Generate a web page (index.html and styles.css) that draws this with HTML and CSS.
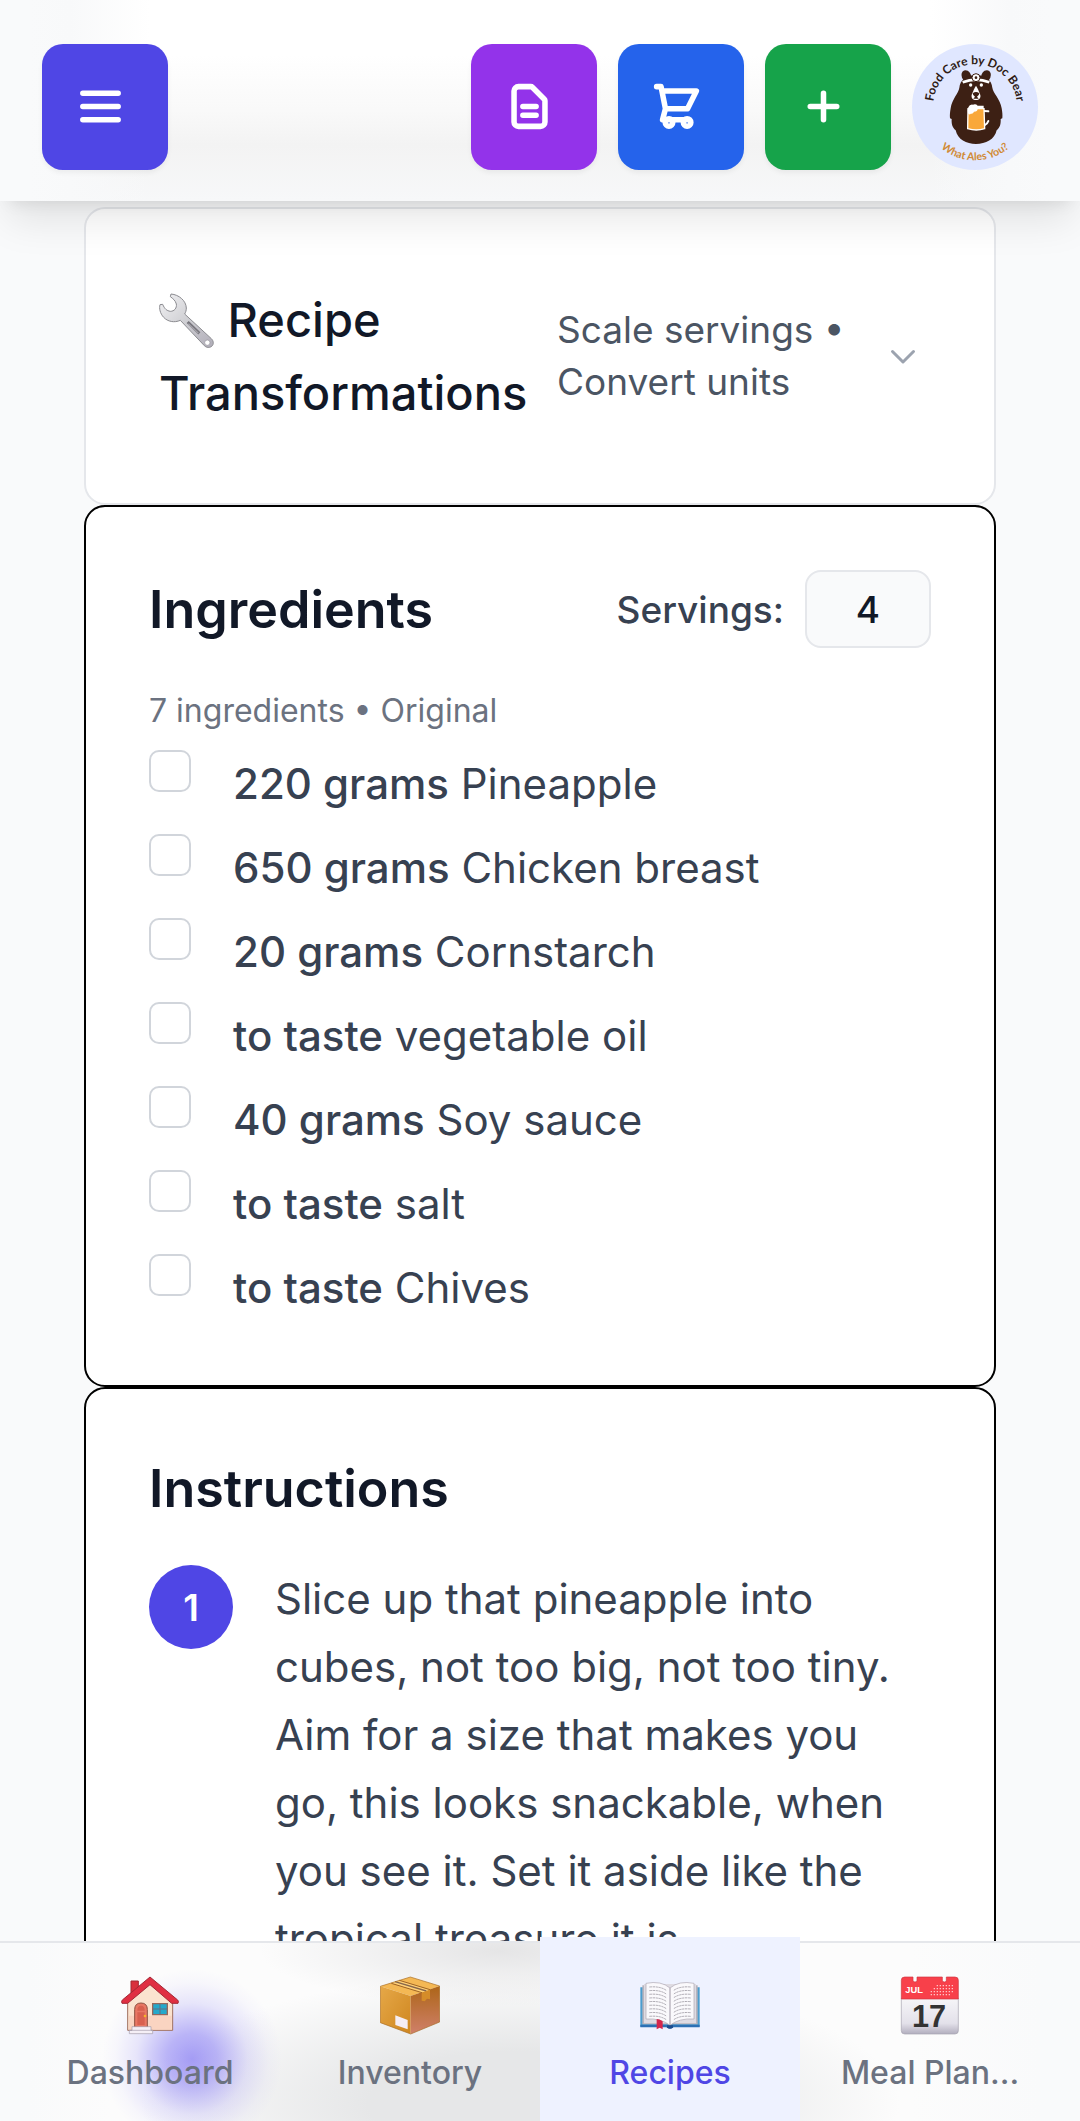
FILE: index.html
```html
<!DOCTYPE html>
<html lang="en">
<head>
<meta charset="utf-8">
<meta name="viewport" content="width=device-width, initial-scale=1">
<title>Recipe</title>
<link rel="stylesheet" href="styles.css">
</head>
<body>
<header class="topbar">
  <button class="action action-menu" type="button" aria-label="Menu">
    <svg class="action-icon" viewBox="0 0 24 24"><path d="M4 6h16M4 12h16M4 18h16"/></svg>
  </button>
  <div class="topbar-actions">
    <button class="action action-notes" type="button" aria-label="Notes">
      <svg class="action-icon" viewBox="0 0 24 24"><path d="M9 12h6m-6 4h6m2 5H7a2 2 0 01-2-2V5a2 2 0 012-2h5.586a1 1 0 01.707.293l5.414 5.414a1 1 0 01.293.707V19a2 2 0 01-2 2z"/></svg>
    </button>
    <button class="action action-cart" type="button" aria-label="Shopping list">
      <svg class="action-icon" viewBox="0 0 24 24"><path d="M3 3h2l.4 2M7 13h10l4-8H5.4M7 13L5.4 5M7 13l-1.300 5h11.300"/><circle cx="8.600" cy="19.200" r="1.700"/><circle cx="16.800" cy="19.200" r="1.700"/></svg>
    </button>
    <button class="action action-add" type="button" aria-label="Add recipe">
      <svg class="action-icon" viewBox="0 0 24 24"><path d="M12 6v12M6 12h12"/></svg>
    </button>
    <a class="avatar" href="#" aria-label="Profile">
      <svg class="avatar-logo" viewBox="36 42 378 378">
        <defs>
          <path id="arc-top" d="M101 251a126 126 0 1 1 248 0"/>
          <path id="arc-bottom" d="M65 231a160 160 0 0 0 320 0"/>
        </defs>
        <text class="logo-name"><textPath href="#arc-top" startOffset="50%">Food Care by Doc Bear</textPath></text>
        <text class="logo-tag"><textPath href="#arc-bottom" startOffset="50%">What Ales You?</textPath></text>
        <g fill="#3d2014">
          <ellipse cx="199" cy="138" rx="14" ry="18" transform="rotate(-22 199 138)"/>
          <ellipse cx="258" cy="138" rx="14" ry="18" transform="rotate(22 258 138)"/>
          <path d="M228 135c-30 0-48 16-50 38-2 16-22 34-26 62-2 12-3 20-2 30l5 2c-1 14 2 26 12 34 6 28 32 41 61 41s56-13 62-41c10-8 13-20 12-34l5-2c1-10 0-18-2-30-4-28-26-46-28-62-2-22-19-38-49-38z"/>
        </g>
        <path d="M188 157q40-16 80 0" fill="none" stroke="#fff" stroke-width="8"/>
        <circle cx="228" cy="143" r="12" fill="#fff" stroke="#3d2014" stroke-width="3"/>
        <circle cx="228" cy="143" r="4" fill="#3d2014"/>
        <circle cx="212" cy="165" r="5" fill="#fff"/><circle cx="244" cy="165" r="5" fill="#fff"/>
        <path d="M228 167c-5 8-9 17-13 28-2 9 4 15 13 15s15-6 13-15c-4-11-8-20-13-28z" fill="#fff"/>
        <path d="M218 190q10-8 20 0-1 8-7 10l5 6h-16l5-6q-6-2-7-10z" fill="#3d2014"/>
        <path d="M251 243l14 1M253 286q10-5 12-13" fill="none" stroke="#fff" stroke-width="6" stroke-linecap="round"/>
        <path d="M204 236h48l2 60q-25 8-51 0z" fill="#f9a83a" stroke="#fff" stroke-width="4"/>
        <path d="M204 250q-2-12 1-18 4-10 14-8 8-4 14 3h18v9h-18q0 9-11 9-3 8-10 6-3 5-8-1z" fill="#fff"/>
      </svg>
    </a>
  </div>
</header>

<main class="content">
  <section class="card card-soft">
    <button class="transform-toggle" type="button" aria-expanded="false">
      <span class="transform-title"><svg class="wrench" viewBox="30 36 168 168" aria-hidden="true">
        <defs><linearGradient id="steel" x1="0" y1="0" x2="1" y2="1"><stop offset="0" stop-color="#f2f2f4"/><stop offset=".5" stop-color="#cfcfd3"/><stop offset="1" stop-color="#b0adb8"/></linearGradient></defs>
        <path d="M66 39c24 2 45 20 46 42 0 7-2 13-5 18l80 74c8 8 7 17 2 22-6 6-16 6-23-1l-72-76c-18 8-38 4-50-9-11-12-14-27-11-38l8-1c6 14 12 19 23 21 12 0 20-10 18-22-3-11-10-16-18-22z" fill="url(#steel)" stroke="#8b8b90" stroke-width="3"/>
        <path d="M116 123l35 34" stroke="#77757c" stroke-width="9"/>
        <path d="M118 128l30 29" stroke="#a5a3aa" stroke-width="4"/>
        <circle cx="175" cy="185" r="8" fill="#fff" stroke="#96939c" stroke-width="2"/>
      </svg> Recipe Transformations</span>
      <span class="transform-hint">Scale servings • Convert units</span>
      <svg class="chevron" viewBox="0 0 24 24" aria-hidden="true"><path d="M19 9l-7 7-7-7"/></svg>
    </button>
  </section>

  <section class="card card-padded">
    <div class="card-head">
      <h2 class="card-title">Ingredients</h2>
      <div class="servings">
        <label class="servings-label" for="servings">Servings:</label>
        <input class="servings-input" id="servings" type="text" inputmode="numeric" value="4">
      </div>
    </div>
    <p class="summary">7 ingredients • Original</p>
    <ul class="ingredients">
      <li><label class="ingredient"><input class="tick" type="checkbox"><span><strong class="amount">220 grams</strong> Pineapple</span></label></li>
      <li><label class="ingredient"><input class="tick" type="checkbox"><span><strong class="amount">650 grams</strong> Chicken breast</span></label></li>
      <li><label class="ingredient"><input class="tick" type="checkbox"><span><strong class="amount">20 grams</strong> Cornstarch</span></label></li>
      <li><label class="ingredient"><input class="tick" type="checkbox"><span><strong class="amount">to taste</strong> vegetable oil</span></label></li>
      <li><label class="ingredient"><input class="tick" type="checkbox"><span><strong class="amount">40 grams</strong> Soy sauce</span></label></li>
      <li><label class="ingredient"><input class="tick" type="checkbox"><span><strong class="amount">to taste</strong> salt</span></label></li>
      <li><label class="ingredient"><input class="tick" type="checkbox"><span><strong class="amount">to taste</strong> Chives</span></label></li>
    </ul>
  </section>

  <section class="card card-padded">
    <h2 class="card-title">Instructions</h2>
    <ol class="steps">
      <li class="step">
        <span class="step-number">1</span>
        <p class="step-text">Slice up that pineapple into cubes, not too big, not too tiny. Aim for a size that makes you go, this looks snackable, when you see it. Set it aside like the tropical treasure it is.</p>
      </li>
    </ol>
  </section>
</main>

<nav class="tabs" aria-label="Main">
  <a class="tab" href="#">
    <svg class="tab-icon" viewBox="63 48 180 180" aria-hidden="true">
      <path d="M96 66h22v40H96z" fill="#d9303c" stroke="#a32832" stroke-width="3"/>
      <path d="M86 120l66-60 69 60v94H86z" fill="#fbe3cf" stroke="#a0705f" stroke-width="3"/>
      <path d="M90 170h128v42H90z" fill="#fac9b8" opacity=".6"/>
      <path d="M153 54l83 69q4 4 1 10h-19l-65-56-67 56H69q-3-6 1-10z" fill="#e02f42" stroke="#a32836" stroke-width="3" stroke-linejoin="round"/>
      <path d="M107 206v-54q0-20 19-20t19 20v54z" fill="#e87764" stroke="#8f5141" stroke-width="3"/>
      <path d="M115 160h22v38h-22zM115 155q0-15 11-15t11 15z" fill="#d8604f"/>
      <circle cx="138" cy="171" r="4" fill="#f7b528"/>
      <path d="M161 134h44v33h-44z" fill="#23a9cc" stroke="#95685d" stroke-width="4"/>
      <path d="M183 134v33M161 150h44" stroke="#666f80" stroke-width="3"/>
      <path d="M99 203h57v11h5v10H91v-10h8zM91 214h70" fill="#f5eff6" stroke="#a29aa9" stroke-width="2"/>
    </svg>
    <span class="tab-label">Dashboard</span>
  </a>
  <a class="tab" href="#">
    <svg class="tab-icon" viewBox="0 0 180 180" aria-hidden="true">
      <defs>
        <linearGradient id="box-l" x1="0" y1="0" x2="1" y2="1"><stop offset="0" stop-color="#e6a848"/><stop offset="1" stop-color="#cf861f"/></linearGradient>
        <linearGradient id="box-r" x1="0" y1="0" x2="0" y2="1"><stop offset="0" stop-color="#ad6518"/><stop offset="1" stop-color="#d0806a"/></linearGradient>
      </defs>
      <path d="M1 34L91 6l88 27-87 30z" fill="#f4b854"/>
      <path d="M1 34l91 29v114L1 143z" fill="url(#box-l)"/>
      <path d="M179 33L92 63v114l87-36z" fill="url(#box-r)"/>
      <path d="M34 24l92 29 24-8L58 16z" fill="#ffd178"/>
      <path d="M34 25l92 28M58 16l92 28" stroke="#9f6324" stroke-width="3"/>
      <path d="M45 20l94 28" stroke="#86664c" stroke-width="4"/>
      <path d="M125 53l25-9v29l-9-2-7 8-9-2z" fill="#d58c29"/>
      <path d="M46 121l37 14v28l-37-13z" fill="#f5edf4"/>
      <path d="M1 34L91 6l88 27v108l-87 36-91-34z" fill="none" stroke="#a86d25" stroke-width="2"/>
    </svg>
    <span class="tab-label">Inventory</span>
  </a>
  <a class="tab tab-active" href="#" aria-current="page">
    <svg class="tab-icon" viewBox="0 0 180 180" aria-hidden="true">
      <path d="M1 37h178v118H1z" fill="#4b9dce"/>
      <path d="M1 149h178v8h-78q-11 7-22 0H1z" fill="#2c70b4"/>
      <path d="M7 31h166v117H7z" fill="#b8b4bd"/>
      <path d="M12 27h156v118H12z" fill="#dedbe2"/>
      <path d="M18 25q45-9 72 14 27-23 72-14v107q-45-3-72 19-27-22-72-19z" fill="#faf9fc" stroke="#aaa5b0" stroke-width="2"/>
      <path d="M90 39v111" stroke="#b5afba" stroke-width="4"/>
      <g fill="none" stroke="#85808b" stroke-width="2" stroke-dasharray="7 2">
        <path d="M28 36q34-3 52 11M28 47q34-3 52 11M28 58q34-3 52 11M28 69q34-3 52 11M28 80q34-3 52 11M28 91q34-3 52 11M28 102q34-3 52 11M28 113q34-3 52 11M28 124q34-3 52 11"/>
        <path d="M152 36q-34-3-52 11M152 47q-34-3-52 11M152 58q-34-3-52 11M152 69q-34-3-52 11M152 80q-34-3-52 11M152 91q-34-3-52 11M152 102q-34-3-52 11M152 113q-34-3-52 11M152 124q-34-3-52 11"/>
      </g>
      <path d="M50 132q8 0 18 7v24l-9-5-9 5z" fill="#d5264c"/>
      <path d="M81 151h18v7q-9 6-18 0z" fill="#1c4c8d"/>
    </svg>
    <span class="tab-label">Recipes</span>
  </a>
  <a class="tab" href="#">
    <svg class="tab-icon" viewBox="0 0 180 180" aria-hidden="true">
      <defs><linearGradient id="page" x1="0" y1="0" x2="0" y2="1"><stop offset="0" stop-color="#f6f5f8"/><stop offset=".7" stop-color="#e3e1ea"/><stop offset="1" stop-color="#b2aebe"/></linearGradient></defs>
      <path d="M4 70h171v97q0 10-10 10H14q-10 0-10-10z" fill="url(#page)" stroke="#a6a3af" stroke-width="2"/>
      <path d="M14 6h25v10q0 5 6 5t6-5V6h76v10q0 5 6 5t6-5V6h26q10 0 10 10v56H4V16Q4 6 14 6z" fill="#f8404a" stroke="#ce3540" stroke-width="2"/>
      <g stroke="#ffc5c8" stroke-width="4" stroke-dasharray="4 5"><path d="M110 32h54M101 41h63M92 50h72M92 59h63"/></g>
      <text class="cal-month" x="16" y="55">JUL</text>
      <text class="cal-day" x="87" y="156">17</text>
    </svg>
    <span class="tab-label">Meal Plan...</span>
  </a>
</nav>
</body>
</html>
```
FILE: styles.css
```css
* {
  box-sizing: border-box;
}

body {
  margin: 0;
  height: 100vh;
  display: flex;
  flex-direction: column;
  overflow: hidden;
  background: #f9fafb;
  color: #374151;
  font-family: Inter, "Liberation Sans", sans-serif;
}

h2, p, ul, ol {
  margin: 0;
  padding: 0;
  font-weight: inherit;
}

ul, ol {
  list-style: none;
}

button, input {
  font: inherit;
  color: inherit;
}

/* Top bar */

.topbar {
  position: relative;
  z-index: 2;
  flex: none;
  display: flex;
  justify-content: space-between;
  padding: 44px 42px 31px;
  background:
    linear-gradient(90deg, #f9fafb 30px, #f8f9fa 70px, transparent 150px, transparent calc(100% - 150px), #f8f9fa calc(100% - 70px), #f9fafb calc(100% - 30px)),
    linear-gradient(#fff 55px, #f9f9f9 110px, #f3f3f3 145px, #f7f8f9 200px);
  box-shadow: 0 26px 39px -8px rgba(0, 0, 0, 0.1), 0 10px 16px -10px rgba(0, 0, 0, 0.1);
}

.topbar-actions {
  display: flex;
  gap: 21px;
}

.action {
  width: 126px;
  height: 126px;
  padding: 0 10px 2px 0;
  display: flex;
  align-items: center;
  justify-content: center;
  border: 0;
  border-radius: 21px;
  color: #fff;
  box-shadow: 0 3px 5px rgba(0, 0, 0, 0.05);
}

.action-menu { background: #4f46e5; }
.action-notes { background: #9333ea; }
.action-cart { background: #2563eb; }
.action-add { background: #16a34a; }

.action-icon {
  width: 53px;
  height: 53px;
  fill: none;
  stroke: currentColor;
  stroke-width: 2.5;
  stroke-linecap: round;
  stroke-linejoin: round;
}

.avatar {
  width: 126px;
  height: 126px;
  border-radius: 50%;
  background: #e0e7ff;
}

.avatar-logo {
  display: block;
  width: 100%;
  height: 100%;
}

.logo-name, .logo-tag {
  font-family: Lato, "Open Sans", sans-serif;
  font-weight: 700;
  text-anchor: middle;
}

.logo-name {
  fill: #2e1b14;
  font-size: 36px;
}

.logo-tag {
  fill: #d08a35;
  font-size: 32px;
}

/* Cards */

.content {
  flex: 1;
  min-height: 0;
  overflow: hidden;
  padding: 6px 84px 0;
}

.card {
  border: 2px solid #000;
  border-radius: 21px;
  background: #fff;
}

.card-soft {
  border-color: #e5e7eb;
}

.card-padded {
  padding: 63px;
}

.transform-toggle {
  width: 100%;
  padding: 74px 73px;
  display: flex;
  align-items: center;
  border: 0;
  background: none;
  text-align: left;
}

.transform-title {
  flex: 0 0 398px;
  color: #111827;
  font-size: 47px;
  font-weight: 500;
  line-height: 73px;
}

.wrench {
  width: 56px;
  height: 56px;
  vertical-align: -12px;
}

.transform-hint {
  flex: 1;
  padding-right: 30px;
  color: #4b5563;
  font-size: 37px;
  line-height: 52px;
}

.chevron {
  flex: none;
  width: 36px;
  height: 36px;
  fill: none;
  stroke: #9ca3af;
  stroke-width: 2;
  stroke-linecap: round;
  stroke-linejoin: round;
}

.card-head {
  display: flex;
  align-items: center;
  justify-content: space-between;
  margin-bottom: 39px;
}

.card-title {
  color: #111827;
  font-size: 52px;
  font-weight: 600;
  line-height: 73px;
}

.servings {
  display: flex;
  align-items: center;
  gap: 21px;
}

.servings-label {
  font-size: 37px;
  font-weight: 500;
}

.servings-input {
  width: 126px;
  height: 78px;
  padding: 0;
  border: 2px solid #e5e7eb;
  border-radius: 16px;
  background: #f9fafb;
  color: #111827;
  font-size: 37px;
  font-weight: 500;
  text-align: center;
}

.summary {
  margin-bottom: 15px;
  color: #6b7280;
  font-size: 32px;
  line-height: 48px;
}

.ingredients {
  display: grid;
  gap: 16px;
}

.ingredient {
  display: flex;
  gap: 42px;
  font-size: 42px;
  line-height: 68px;
}

.tick {
  appearance: none;
  flex: none;
  width: 42px;
  height: 42px;
  margin: 0;
  border: 2px solid #d1d5db;
  border-radius: 10px;
  background: #fff;
}

.tick:checked {
  border-color: #4f46e5;
  background: #4f46e5;
}

.amount {
  font-weight: 500;
}

.steps {
  margin-top: 40px;
}

.step {
  display: flex;
  gap: 42px;
}

.step-number {
  flex: none;
  width: 84px;
  height: 84px;
  display: grid;
  place-items: center;
  border-radius: 50%;
  background: #4f46e5;
  color: #fff;
  font-size: 37px;
  font-weight: 600;
}

.step-text {
  font-size: 42px;
  line-height: 68px;
}

/* Bottom tabs */

.tabs {
  position: relative;
  z-index: 2;
  flex: none;
  display: grid;
  grid-template-columns: repeat(4, 1fr);
  padding: 0 20px;
  border-top: 2px solid #e5e7eb;
  background:
    radial-gradient(circle 90px at 192px 116px, rgba(120, 108, 242, 0.66), rgba(120, 108, 242, 0.5) 28%, rgba(120, 108, 242, 0.16) 62%, rgba(120, 108, 242, 0.04) 85%, transparent),
    linear-gradient(90deg, #f9fafb 30px, transparent 110px, transparent calc(100% - 170px), #f9fafb calc(100% - 40px)),
    radial-gradient(ellipse 240px 55px at 500px 8px, #e5e5e6, transparent),
    radial-gradient(ellipse 380px 130px at 520px 160px, #e6e7e8 40%, transparent),
    #fcfcfc;
}

.tab {
  display: flex;
  flex-direction: column;
  align-items: center;
  gap: 17px;
  margin-top: -6px;
  padding: 38px 0 27px;
  color: #6b7280;
  text-decoration: none;
}

.tab-active {
  background: #eef2ff;
  color: #4f46e5;
}

.tab-icon {
  width: 60px;
  height: 60px;
}

.tab-label {
  font-size: 32px;
  font-weight: 500;
  line-height: 42px;
}

.cal-month, .cal-day {
  font-family: "Liberation Sans", sans-serif;
  font-weight: 700;
}

.cal-month {
  fill: #fff;
  font-size: 28px;
}

.cal-day {
  fill: #333;
  font-size: 92px;
  text-anchor: middle;
}
```
